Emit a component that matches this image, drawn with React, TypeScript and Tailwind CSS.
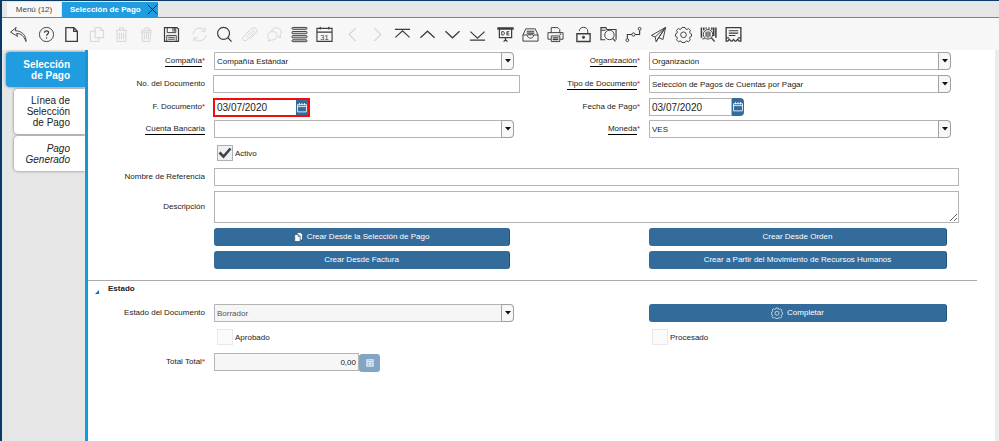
import type { ReactNode } from "react";

type IconProps = { children: ReactNode; className?: string };

function Icon({ children, className = "size-[18px]" }: IconProps) {
  return (
    <svg viewBox="0 0 18 18" className={className} fill="none" stroke="currentColor" strokeWidth="1" aria-hidden="true">
      {children}
    </svg>
  );
}

const gear = (
  <>
    <path d="M7.400 1.500h3.200l.5 1.500 1.500.7 1.800-.9 1.900 1.900-.8 1.800.7 1.500 1.300.5v2.400l-1.500.6-.6 1.500.8 1.700-2 2-1.800-.9-1.400.6-.5 1.100H7.400l-.6-1.100-1.500-.6-1.700.9-2-2 .9-1.700-.6-1.500-1.400-.6V8.400l1.400-.5.6-1.500-.9-1.800 2-1.900 1.800.9 1.400-.7z" />
    <circle cx="9" cy="9.300" r="3" />
  </>
);

type Tool = { name: string; off?: boolean; art: ReactNode };

const toolGroups: Tool[][] = [
  [
    {
      name: "Deshacer",
      art: <path d="M6.500 1.500.7 6.500l7.300 4.500-1-3c4.500-.2 7.500 2.300 10 8.500.2-6.500-4.500-11.500-11.500-11.500z" />,
    },
  ],
  [
    {
      name: "Ayuda",
      art: (
        <>
          <circle cx="9" cy="9" r="7.500" />
          <path strokeWidth="1.300" d="M6.900 7.200c0-2.800 4.300-2.600 4.300-.2 0 1.600-2.100 1.500-2.100 3.400M9.100 11.900v1.400" />
        </>
      ),
    },
    { name: "Nuevo", art: <path strokeWidth="1.400" d="M3 1.700h8.500l3.700 3.800v10.800H3zM11.300 1.700v4h4" /> },
    { name: "Copiar", off: true, art: <path d="M7.500 1.700h6l3 3v7.800h-9zM13.300 1.700v3.200h3.200M7.500 5.500h-5v10.800h9v-3.800" /> },
    {
      name: "Borrar",
      off: true,
      art: <path d="M3 4.500h12M7 4.500V2h4v2.500M4.300 4.500v11.800h9.400V4.500M6.700 7v7M9 7v7M11.300 7v7" />,
    },
    {
      name: "Borrar selección",
      off: true,
      art: <path d="M3.500 4.500h11M6.500 3.500l1-1.500h4v2.500M4 5l.8 11.300h7.800L13.700 5M6.500 7l.4 7M9 7v7M11.200 7l-.4 7M3.500 6.500H14" />,
    },
    {
      name: "Guardar",
      art: (
        <>
          <path strokeWidth="1.300" d="M1.600 1.700h13.200l1.600 1.600v13H1.600z" />
          <path d="M4.500 2v5h9V2M10.500 2v4M12 2v4M4 16V10h10v6M5.500 12h7M5.500 14h7" />
        </>
      ),
    },
  ],
  [
    {
      name: "Refrescar",
      off: true,
      art: <path d="M2 8.500c.8-6.800 9.500-8.500 12.800-3.500M15 1.500V5.500h-4M16 9.500c-.8 6.800-9.500 8.500-12.800 3.500M3 16.500v-4h4" />,
    },
    {
      name: "Buscar",
      art: (
        <>
          <circle cx="8" cy="7.800" r="6.300" strokeWidth="1.200" />
          <path strokeWidth="1.300" d="m12.500 12.500 4 4" />
        </>
      ),
    },
    {
      name: "Adjunto",
      off: true,
      art: <path d="m5 12.500 7-7c1.500-1.500 3.300.3 1.800 1.800L6.500 14.500c-3 3-6.500-.5-3.800-3.300l8-8c4-3.700 8.300.7 4.800 4.500l-6 6" />,
    },
    {
      name: "Chat",
      off: true,
      art: <path d="M6 5.500C7 .5 15.500.8 16.200 6c.2 2-.7 3.300-1.500 4.200l.8 2.300-2.500-.8M11.800 10c0-5.500-9.800-5.500-10 0-.1 2 .8 3 1.600 3.700l-.9 2.300 3.200-1.200c3.100.5 6.100-1.300 6.100-4.800z" />,
    },
    {
      name: "Cuadrícula",
      art: (
        <g fill="#cfcfcf">
          <rect x="1" y="1.500" width="16" height="2" rx="1" />
          <rect x="1" y="5.800" width="16" height="2.400" rx="1" />
          <rect x="1" y="10.200" width="16" height="2.400" rx="1" />
          <rect x="1" y="14.600" width="16" height="2" rx="1" />
        </g>
      ),
    },
    {
      name: "Calendario",
      art: (
        <>
          <path strokeWidth="1.200" d="M1 2.500h16v13.800H1zM1 6.500h16M4.500.8v3M13.500.8v3" />
          <text x="9" y="14.500" textAnchor="middle" fontSize="8" fontFamily="Liberation Sans, sans-serif" fill="currentColor" stroke="none">
            31
          </text>
        </>
      ),
    },
  ],
  [
    { name: "Anterior", off: true, art: <path strokeWidth="1.200" d="M12.500 2 5.500 9l7 7" /> },
    { name: "Siguiente", off: true, art: <path strokeWidth="1.200" d="m5.500 2 7 7-7 7" /> },
    { name: "Primer registro", art: <path strokeWidth="1.300" d="M1 3.500h16M1.500 12 9 5l7.500 7" /> },
    { name: "Registro anterior", art: <path strokeWidth="1.300" d="m1.500 12.500 7.500-7 7.500 7" /> },
    { name: "Registro siguiente", art: <path strokeWidth="1.300" d="m1.500 5.500 7.500 7 7.500-7" /> },
    { name: "Último registro", art: <path strokeWidth="1.300" d="m1.500 6 7.500 7 7.500-7M1 15h16" /> },
  ],
  [
    {
      name: "Informe",
      art: (
        <>
          <path strokeWidth="1.300" d="M1 2h16v1.200H1zM2.500 3.500v8.800h13V3.500M9 12.300v2.200M7 16.500l2-2 2 2" />
          <path d="M5 6h2l1 1.700-1 1.800H5zM13 6h-2.500v3.500H13M10.500 7.700h2" />
        </>
      ),
    },
    {
      name: "Archivo",
      art: (
        <>
          <path d="M4 3h10l3 6.500V16H1V9.500zM1 9.500h4.500c.3 4.500 6.700 4.500 7 0H17" />
          <path d="M5 5.500h8M5 7.500h8M6 9.300h6" strokeWidth="1.200" />
        </>
      ),
    },
    {
      name: "Imprimir",
      art: (
        <>
          <path d="M4.500 7V1.700h7l2 2V7M1 7h16v7h-3.200M4.200 14H1V7M4.500 10.500h9v6h-9z" />
          <path strokeWidth="1.300" d="M6 12.500h6M6 14.500h6M13.500 8.700h1.500" />
        </>
      ),
    },
  ],
  [
    {
      name: "Bloquear",
      art: (
        <>
          <path strokeWidth="1.400" d="M2 8.200h14v8.200H2z" />
          <path d="M4.500 5.500c.2-5.500 9-5.500 9 0v2.500" />
          <circle cx="9" cy="12" r="1.200" fill="currentColor" />
        </>
      ),
    },
    {
      name: "Zoom",
      art: (
        <>
          <path strokeWidth="1.200" d="M5.500 14.500H1V1.700h5.200l1 2H17v10.800M1 4.500h5" />
          <circle cx="10" cy="9.500" r="5" />
          <path strokeWidth="1.300" d="m13.500 13.300 3 3" />
        </>
      ),
    },
    {
      name: "Flujo de trabajo",
      art: (
        <>
          <circle cx="2.500" cy="15" r="1.500" />
          <circle cx="9" cy="9" r="1.700" />
          <circle cx="15.500" cy="3" r="1.500" />
          <path strokeWidth="1.200" d="M2.500 13.500V9h4.800M10.700 9h4.800V4.500" />
        </>
      ),
    },
    { name: "Enviar", art: <path d="M16.500 1.500 1.500 10l4 1.600zM16.500 1.500l-2.800 12.800-4.500-2zM5.500 11.600l1 5L16.500 1.500M6.500 16.600l2.700-4.300" /> },
    { name: "Proceso", art: gear },
    {
      name: "Información de producto",
      art: (
        <>
          <path strokeWidth="1.600" d="M1.500 1.500v11M4 1.500v3M6.500 1.500v1.500M9.500 1.500v1.500M12.500 1.500v2.500M14.500 1.500v9M16.800 1.500v11" />
          <circle cx="8.500" cy="8.800" r="5" />
          <path d="M6.500 6v5.500M8.500 5.500v7M10.500 6v5.500M5 13.500H2.500" strokeWidth="1.200" />
          <path strokeWidth="1.400" d="m12 12.500 3.500 4" />
        </>
      ),
    },
    {
      name: "Recibo",
      art: (
        <>
          <path strokeWidth="1.400" d="M3 16H1.200V1.700h15.600V16H15l-1.500-2-2 2h-1L9 14.200 7.500 16h-1l-2-2zM1.200 12.500h3M13.800 12.500h3" />
          <path strokeWidth="1.200" d="M4 5h10M4 7.500h10M4 10h7" />
        </>
      ),
    },
  ],
];

function Label({ htmlFor, text, required, link, block = "h-[18px]" }: { htmlFor: string; text: string; required?: boolean; link?: boolean; block?: string }) {
  return (
    <label htmlFor={htmlFor} className={`flex items-center justify-end whitespace-nowrap pr-[9px] ${block}`}>
      <span className={link ? "border-b border-black leading-[10px]" : "leading-[10px]"}>{text}</span>
      {required && <span className="leading-[10px] text-red-600">*</span>}
    </label>
  );
}

function Combo({ id, value, readOnly }: { id: string; value: string; readOnly?: boolean }) {
  return (
    <div className="relative mr-2 h-[18px]">
      <select
        id={id}
        defaultValue={value}
        className={`h-full w-full appearance-none rounded-r-sm border border-[#b4b4b4] pl-0.5 pr-4 pt-px ${readOnly ? "bg-[#f6f6f6] text-[#555]" : "bg-white"}`}
      >
        <option value={value}>{value}</option>
      </select>
      <span className="pointer-events-none absolute inset-y-0 right-0 flex w-[13px] items-center justify-center rounded-r-sm border border-[#a0a0a0] bg-[#f7f7f7]">
        <svg viewBox="0 0 6 4" className="h-1 w-1.5" aria-hidden="true">
          <path d="M0 0h6L3 3.500z" fill="#111" />
        </svg>
      </span>
    </div>
  );
}

function DateBox({ id, invalid }: { id: string; invalid?: boolean }) {
  return (
    <div className={`flex ${invalid ? "-ml-px h-[19px] w-[97px] border-2 border-[#f20d0d]" : "h-[18px] w-[95px]"}`}>
      <input
        id={id}
        type="text"
        defaultValue="03/07/2020"
        className={`h-full w-0 grow bg-white text-[10px] text-[#222] ${invalid ? "pl-0.5" : "border border-[#b4b4b4] pl-0.5"}`}
      />
      <button type="button" aria-label="Abrir calendario" className={`flex w-3 items-center justify-center bg-[#336b9b] text-white ${invalid ? "" : "rounded-r-sm"}`}>
        <Icon className="size-[10px]">
          <path strokeWidth="1.500" d="M1 3h16v13H1zM1 6.500h16M4.500 0v4M9 0v4M13.500 0v4" />
        </Icon>
      </button>
    </div>
  );
}

function Check({ label, checked }: { label: string; checked?: boolean }) {
  return (
    <label className="flex h-5 items-center gap-0.5 pl-[3px]">
      <span className="relative size-4">
        <input
          type="checkbox"
          defaultChecked={checked}
          className={`block size-4 appearance-none border ${checked ? "border-[#a9b1b8] bg-[#eef0f2]" : "border-[#e9e9e9] bg-[#fbfbfb]"}`}
        />
        {checked && (
          <svg viewBox="0 0 16 16" className="pointer-events-none absolute inset-0" fill="none" stroke="#3f4246" strokeWidth="2.600" aria-hidden="true">
            <path d="m2.500 7.500 4 4 7-8" />
          </svg>
        )}
      </span>
      <span className="pt-0.5">{label}</span>
    </label>
  );
}

function Action({ children }: { children: ReactNode }) {
  return (
    <button type="button" className="mr-3 flex h-[18px] items-center justify-center gap-1 rounded-[3px] border-r border-[#1f527d] bg-[#336b9b] text-white">
      {children}
    </button>
  );
}

const columns = "mr-9 grid grid-cols-[126fr_308fr_127fr_310fr] gap-y-[5px]";
const textBox = "border border-[#b4b4b4] bg-white";

export default function App() {
  return (
    <div className="flex min-h-screen flex-col border-l-2 border-t border-[#0a3a68] bg-white font-['Liberation_Sans',Arial,sans-serif] text-[8px] text-[#222]">
      <nav className="flex h-[17px] items-stretch border-b border-[#2a9bd6] bg-[#e6e6e6] pl-[5px] pt-px">
        <button type="button" className="w-[54px] bg-[#f8f8f8] text-[#444]">
          Menú (12)
        </button>
        <div className="ml-px flex w-24 items-center bg-[#209ce0] pl-2 font-bold text-white">
          <button type="button" className="whitespace-nowrap">
            Selección de Pago
          </button>
          <button type="button" aria-label="Cerrar" className="ml-auto text-[#123]">
            <Icon className="size-[11px]">
              <path strokeWidth="1.500" d="m1 1 16 16M17 1 1 17" />
            </Icon>
          </button>
        </div>
      </nav>

      <div role="toolbar" className="flex h-[32px] items-center gap-[3px] bg-[#f7f7f7] pl-1">
        {toolGroups.map((group, i) => (
          <div key={i} className="flex">
            {group.map((tool) => (
              <button key={tool.name} type="button" aria-label={tool.name} className={`flex w-[25px] justify-center ${tool.off ? "text-[#d3d3d3]" : "text-[#3c3c3c]"}`}>
                <Icon className="size-[17px]">{tool.art}</Icon>
              </button>
            ))}
          </div>
        ))}
      </div>

      <div className="flex grow">
        <aside className="flex w-[86px] shrink-0 flex-col gap-0.5 border-r-[3px] border-[#0f9bdc] bg-[#e6e6e6] pt-0.5 text-right text-[10px] leading-[11px] text-[#222]">
          <button type="button" className="ml-1 flex h-[35px] items-center justify-end rounded-l-[4px] bg-[#209ce0] pr-[15px] text-right font-bold text-white shadow-[0_0_3px_#777]">
            Selección
            <br />
            de Pago
          </button>
          <button type="button" className="ml-3 flex h-[45px] items-center justify-end rounded-l-[4px] bg-white pr-[15px] text-right shadow-[0_0_3px_#777]">
            Línea de
            <br />
            Selección
            <br />
            de Pago
          </button>
          <button type="button" className="ml-3 flex h-[35px] items-center justify-end rounded-l-[4px] bg-white pr-[15px] text-right italic shadow-[0_0_3px_#777]">
            Pago
            <br />
            Generado
          </button>
        </aside>

        <main className="grow border-r-4 border-[#ececec] pt-0.5">
          <form>
            <div className={`${columns} grid-rows-[18px_18px_17px_18px_20px_18px_32px_18px_18px]`}>
              <Label htmlFor="company" text="Compañía" required link />
              <Combo id="company" value="Compañía Estándar" />
              <Label htmlFor="org" text="Organización" required link />
              <Combo id="org" value="Organización" />

              <Label htmlFor="docno" text="No. del Documento" />
              <input id="docno" type="text" className={`-ml-px mr-0.5 ${textBox}`} />
              <Label htmlFor="doctype" text="Tipo de Documento" required link />
              <Combo id="doctype" value="Selección de Pagos de Cuentas por Pagar" />

              <Label htmlFor="docdate" text="F. Documento" required block="h-[17px]" />
              <DateBox id="docdate" invalid />
              <Label htmlFor="paydate" text="Fecha de Pago" required block="h-[17px]" />
              <DateBox id="paydate" />

              <Label htmlFor="bank" text="Cuenta Bancaria" link />
              <Combo id="bank" value="" />
              <Label htmlFor="currency" text="Moneda" required link />
              <Combo id="currency" value="VES" />

              <div className="col-start-2">
                <Check label="Activo" checked />
              </div>

              <div className="col-start-1">
                <Label htmlFor="refname" text="Nombre de Referencia" />
              </div>
              <input id="refname" type="text" className={`col-span-3 ${textBox}`} />

              <Label htmlFor="description" text="Descripción" block="h-8" />
              <textarea id="description" className={`col-span-3 block h-8 ${textBox}`} />

              <div className="col-start-2 grid">
                <Action>
                  <svg viewBox="0 0 9 10" className="h-[10px] w-[9px]" fill="#fff" stroke="#29506f" strokeWidth=".7" aria-hidden="true">
                    <path d="M3 .5h3.500l2 2V8H3z" />
                    <path d="M.7 2.500h3.500l2 2v5H.7zM4.200 2.500v2h2" />
                  </svg>
                  Crear Desde la Selección de Pago
                </Action>
              </div>
              <div className="col-start-4 grid">
                <Action>Crear Desde Orden</Action>
              </div>
              <div className="col-start-2 grid">
                <Action>Crear Desde Factura</Action>
              </div>
              <div className="col-start-4 grid">
                <Action>Crear a Partir del Movimiento de Recursos Humanos</Action>
              </div>
            </div>

            <h2 className="mr-[18px] mt-[11px] flex h-6 border-t border-[#aaa] pl-[7px] pt-0.5 font-bold leading-[11px]">
              <button type="button" className="flex h-[11px] items-end gap-[9px]">
                <svg viewBox="0 0 4 4" className="size-1" aria-hidden="true">
                  <path d="M4 0v4H0z" fill="#0a6fc8" />
                </svg>
                Estado
              </button>
            </h2>

            <div className={`${columns} grid-rows-[18px_21px_20px]`}>
              <Label htmlFor="status" text="Estado del Documento" />
              <Combo id="status" value="Borrador" readOnly />
              <div className="col-start-4 grid">
                <Action>
                  <Icon className="size-3">{gear}</Icon>
                  Completar
                </Action>
              </div>

              <div className="col-start-2">
                <Check label="Aprobado" />
              </div>
              <div className="col-start-4">
                <Check label="Procesado" />
              </div>

              <Label htmlFor="total" text="Total Total" required />
              <div className="flex items-start">
                <input id="total" type="text" readOnly defaultValue="0,00" className="h-[18px] w-[145px] border border-[#b4b4b4] bg-[#f6f6f6] pr-0.5 text-right" />
                <button type="button" aria-label="Calculadora" className="mt-px flex h-[18px] w-[21px] items-center justify-center rounded-[3px] bg-[#82a5c4] text-[#e4edf5]">
                  <Icon className="size-2">
                    <path strokeWidth="2.500" d="M2 2h14v14H2zM2 6h14M2 11h14M9 7v9" />
                  </Icon>
                </button>
              </div>
            </div>
          </form>
        </main>
      </div>
    </div>
  );
}
